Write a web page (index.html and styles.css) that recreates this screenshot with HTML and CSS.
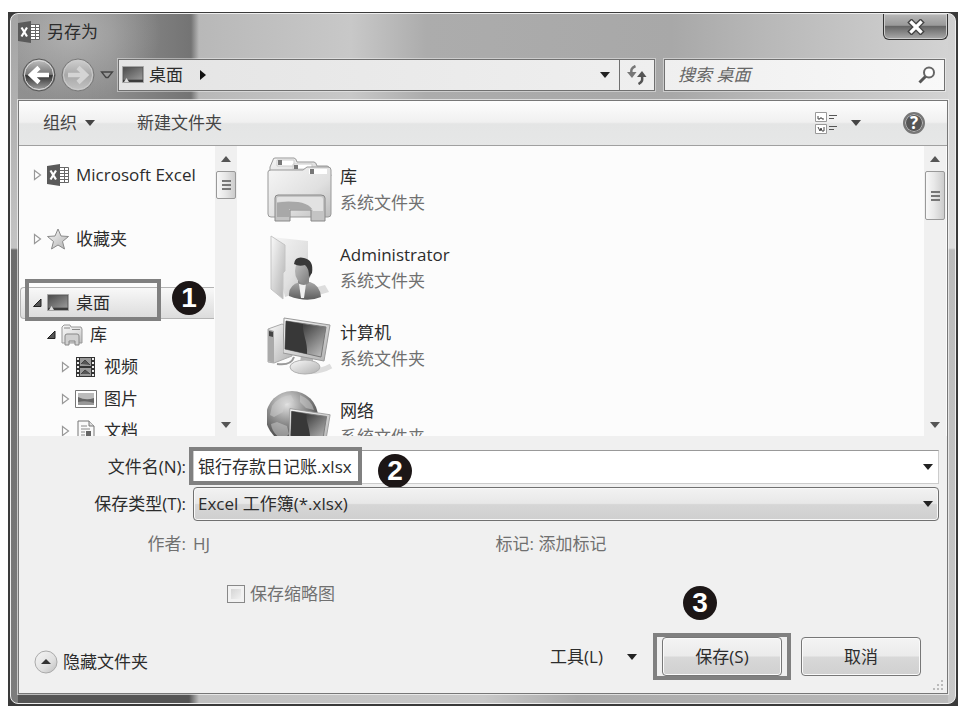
FILE: index.html
```html
<!DOCTYPE html>
<html lang="zh-CN">
<head>
    <meta charset="UTF-8">
    <meta name="viewport" content="width=device-width, initial-scale=1.0">
    <title>另存为</title>
    <link rel="stylesheet" href="styles.css">
</head>
<body>
    <svg class="defs" aria-hidden="true">
        <defs>
            <linearGradient id="metal" x1="0" y1="0" x2="1" y2="1">
                <stop offset="0" stop-color="#fafafa"/>
                <stop offset="1" stop-color="#b0b0b0"/>
            </linearGradient>
            <linearGradient id="folder" x1="0" y1="0" x2="1" y2="1">
                <stop offset="0" stop-color="#f6f6f6"/>
                <stop offset="0.6" stop-color="#e0e0e0"/>
                <stop offset="1" stop-color="#bcbcbc"/>
            </linearGradient>
            <linearGradient id="screen" x1="0" y1="0" x2="1" y2="1">
                <stop offset="0.3" stop-color="#444"/>
                <stop offset="1" stop-color="#c8c8c8"/>
            </linearGradient>
            <linearGradient id="desk" x1="0" y1="0" x2="1" y2="1">
                <stop offset="0" stop-color="#4c4c4c"/>
                <stop offset="1" stop-color="#999"/>
            </linearGradient>
            <linearGradient id="coat" x1="0" y1="0" x2="0" y2="1">
                <stop offset="0" stop-color="#a8a8a8"/>
                <stop offset="1" stop-color="#5c5c5c"/>
            </linearGradient>
            <linearGradient id="face" x1="0" y1="0" x2="1" y2="1">
                <stop offset="0" stop-color="#c8c8c8"/>
                <stop offset="1" stop-color="#777"/>
            </linearGradient>
            <linearGradient id="dark-ball" x1="0" y1="0" x2="0" y2="1">
                <stop offset="0" stop-color="#c4c4c4"/>
                <stop offset="0.48" stop-color="#777"/>
                <stop offset="0.52" stop-color="#333"/>
                <stop offset="1" stop-color="#aaa"/>
            </linearGradient>
            <linearGradient id="light-ball" x1="0" y1="0" x2="0" y2="1">
                <stop offset="0" stop-color="#d0d0d0"/>
                <stop offset="0.5" stop-color="#a8a8a8"/>
                <stop offset="1" stop-color="#c4c4c4"/>
            </linearGradient>
            <radialGradient id="globe" cx="0.4" cy="0.25" r="0.75">
                <stop offset="0" stop-color="#e4e4e4"/>
                <stop offset="0.5" stop-color="#8c8c8c"/>
                <stop offset="1" stop-color="#3c3c3c"/>
            </radialGradient>
        </defs>
        <symbol id="excel" viewBox="0 0 22 22">
            <path d="M12 3.500h9.500v15H12z" fill="#fff" stroke="#666"/>
            <path d="M13 6.500h8M13 9.500h8M13 12.500h8M13 15.500h8M17.500 4v14" stroke="#666"/>
            <path d="M0 2l13-2v22L0 20z" fill="#5a5a5a"/>
            <path d="M3.500 6.500l5.500 9M9 6.500l-5.500 9" stroke="#fff" stroke-width="2.200"/>
        </symbol>
        <symbol id="desktop" viewBox="0 0 22 18">
            <path d="M.5.5h21v16H.5z" fill="#555" stroke="#a4a4a4"/>
            <path d="M1.500 1.500h19v12h-19z" fill="url(#desk)"/>
            <path d="M1 14h20v2H1z" fill="#3c3c3c"/>
            <path d="M2 16l2.500-4L7 16z" fill="#ddd"/>
        </symbol>
        <symbol id="closed" viewBox="0 0 9 12">
            <path d="M1.500 1.500v9L7.500 6z" fill="#fff" stroke="#999" stroke-width="1.200"/>
        </symbol>
        <symbol id="open" viewBox="0 0 9 12">
            <path d="M8 2v7.500H.5z" fill="#555" stroke="#222"/>
        </symbol>
        <symbol id="monitor" viewBox="0 0 48 60">
            <path d="M18 37l12 2v8H17z" fill="#b5b5b5"/>
            <ellipse cx="22" cy="50" rx="15" ry="7" fill="url(#metal)" stroke="#b0b0b0"/>
            <path d="M1 1l46 7-6 36L0 36z" fill="url(#metal)" stroke="#999"/>
            <path d="M3 4l40 6-5 30L2 32z" fill="url(#screen)" stroke="#777"/>
            <path d="M3 4l17 3c-1 9 5 18 4 30L2 32z" fill="#383838"/>
        </symbol>
    </svg>

    <div class="window">
        <div class="frame">
            <header class="titlebar">
                <svg class="app-icon"><use href="#excel"/></svg>
                <h1>另存为</h1>
                <button type="button" class="close" aria-label="关闭">
                    <svg width="18" height="16" viewBox="0 0 18 16">
                        <path d="M4.500 3.500l9 9M13.500 3.500l-9 9" stroke="#444" stroke-width="6" stroke-linecap="square"/>
                        <path d="M4.500 3.500l9 9M13.500 3.500l-9 9" stroke="#fff" stroke-width="3.200" stroke-linecap="square"/>
                    </svg>
                </button>
            </header>

            <div class="navbar">
                <div class="history">
                    <button type="button" aria-label="后退">
                        <svg width="34" height="34" viewBox="0 0 34 34">
                            <circle cx="17" cy="17" r="16" fill="url(#dark-ball)" stroke="#555"/>
                            <circle cx="17" cy="17" r="14.500" fill="none" stroke="#ddd"/>
                            <path d="M27 17H10M17 9.500L9 17l8 7.500" fill="none" stroke="#fff" stroke-width="4.500"/>
                        </svg>
                    </button>
                    <button type="button" aria-label="前进">
                        <svg width="34" height="34" viewBox="0 0 34 34">
                            <circle cx="17" cy="17" r="16" fill="url(#light-ball)" stroke="#777"/>
                            <circle cx="17" cy="17" r="14.500" fill="none" stroke="#ccc"/>
                            <path d="M7 17h17M17 9.500l8 7.500-8 7.500" fill="none" stroke="#d4d4d4" stroke-width="4.500"/>
                        </svg>
                    </button>
                    <button type="button" aria-label="最近的位置">
                        <svg width="14" height="10" viewBox="0 0 14 10">
                            <path d="M1.500 2h11L8 7.500H6z" fill="#999" stroke="#444" stroke-width="1.300"/>
                        </svg>
                    </button>
                </div>
                <div class="address">
                    <svg class="place-icon"><use href="#desktop"/></svg>
                    <span class="crumb">桌面</span>
                    <svg width="6" height="10" viewBox="0 0 6 10"><path d="M0 0l6 5-6 5z" fill="#111"/></svg>
                    <button type="button" class="address-drop" aria-label="以前的位置"><span class="arrow"></span></button>
                    <button type="button" class="refresh" aria-label="刷新">
                        <svg width="20" height="20" viewBox="0 0 20 20">
                            <path d="M8.500 1C4 3 4 5 4.500 9" fill="none" stroke="#777" stroke-width="2.500"/>
                            <path d="M0 7h9.500L5 13z" fill="#777"/>
                            <path d="M11.500 19c4-2 4-4 3.500-8" fill="none" stroke="#555" stroke-width="2.500"/>
                            <path d="M10 12h9.500L15 6z" fill="#555"/>
                        </svg>
                    </button>
                </div>
                <div class="search">
                    <input type="text" placeholder="搜索 桌面" aria-label="搜索 桌面">
                    <svg width="18" height="18" viewBox="0 0 18 18">
                        <path d="M1.500 16.500L8 10" stroke="#555" stroke-width="3"/>
                        <circle cx="11" cy="6.500" r="5" fill="#fff" stroke="#666" stroke-width="2"/>
                    </svg>
                </div>
            </div>

            <main class="client">
                <div class="toolbar">
                    <button type="button">组织 <span class="arrow"></span></button>
                    <button type="button">新建文件夹</button>
                    <button type="button" class="view" aria-label="更改视图">
                        <svg width="24" height="22" viewBox="0 0 24 22">
                            <path d="M.5.5h11v9H.5zM.5 12.500h11v9H.5z" fill="#fff" stroke="#999"/>
                            <path d="M3 4v3h2V6h2v1h2M3 15l2 4 1-3 1 3h2v-4" fill="none" stroke="#444"/>
                            <path d="M14 3.500h8M14 6.500h5M14 14.500h8M14 17.500h5" stroke="#555"/>
                        </svg>
                        <span class="arrow"></span>
                    </button>
                    <button type="button" class="help" aria-label="帮助">?</button>
                </div>

                <div class="browser">
                    <nav class="tree">
                        <ul>
                            <li class="root"><svg class="twisty"><use href="#closed"/></svg><svg class="icon"><use href="#excel"/></svg>Microsoft Excel</li>
                            <li class="root">
                                <svg class="twisty"><use href="#closed"/></svg>
                                <svg class="icon" viewBox="0 0 22 22"><path d="M11 1l3 7 7.500.500-6 5 2 7.500-6.500-4-6.500 4 2-7.500-6-5L8 8z" fill="url(#metal)" stroke="#8a8a8a"/></svg>收藏夹
                            </li>
                            <li class="selected">
                                <svg class="twisty"><use href="#open"/></svg><svg class="icon"><use href="#desktop"/></svg>桌面
                                <span class="outline"></span>
                                <span class="badge">1</span>
                            </li>
                            <li class="level1">
                                <svg class="twisty"><use href="#open"/></svg>
                                <svg class="icon" viewBox="0 0 22 22"><path d="M1 19V3l2-2h6l1 2h10l1 2v14z" fill="url(#folder)" stroke="#999"/><path d="M3 4h6M11 5.500h8" stroke="#888"/><path d="M4 21v-9q0-2 2-2h10q2 0 2 2v9h-4v-4H8v4z" fill="#d0d0d0" stroke="#888"/></svg>库
                            </li>
                            <li class="level2">
                                <svg class="twisty"><use href="#closed"/></svg>
                                <svg class="icon" viewBox="0 0 22 22"><path d="M1 1h19v20H1z" fill="#333"/><path d="M5 2h11v8H5zM5 12h11v8H5z" fill="#999"/><path d="M6 8l4-4 5 5M6 18l4-4 5 4" fill="#555" stroke="#444"/><path d="M3 2v19M18 2v19" stroke="#eee" stroke-width="2" stroke-dasharray="2 2"/></svg>视频
                            </li>
                            <li class="level2">
                                <svg class="twisty"><use href="#closed"/></svg>
                                <svg class="icon" viewBox="0 0 22 22"><path d="M.5 2.500h21v17H.5z" fill="#fff" stroke="#777"/><path d="M3 5h16v12H3z" fill="#bbb"/><path d="M3 9q8 4 16 1v7H3z" fill="#666"/><path d="M3 14q8-2 16 1v2H3z" fill="#999"/></svg>图片
                            </li>
                            <li class="level2">
                                <svg class="twisty"><use href="#closed"/></svg>
                                <svg class="icon" viewBox="0 0 22 22"><path d="M3 1h11l5 5v15H3z" fill="#fafafa" stroke="#777"/><path d="M14 1v5h5" fill="#ddd" stroke="#777"/><path d="M6 6h6M6 9h9M6 12h4M6 15h4M6 18h9" stroke="#888"/><path d="M11 11h5v5h-5z" fill="#666"/></svg>文档
                            </li>
                        </ul>
                    </nav>
                    <div class="scrollbar">
                        <span class="arrow up"></span>
                        <span class="thumb"></span>
                        <span class="arrow down"></span>
                    </div>

                    <ul class="files">
                        <li>
                            <svg width="66" height="66" viewBox="0 0 66 66">
                                <path d="M3 16V10L6 3q0-2 2-2h19q2 0 3 4h17q2 0 3 4h10q2 0 2 2l2 8z" fill="url(#folder)" stroke="#999"/>
                                <path d="M10 3h17v6H10zM26 7h19v5H26zM42 11h18v5H42z" fill="#fff" stroke="#ccc"/>
                                <path d="M11 3h4v5h-4zM27 8h4v4h-4z" fill="#777"/>
                                <path d="M1 15q0-2 3-2h32l4-3h21q3 0 3 3v44q0 3-3 3H4q-3 0-3-3z" fill="url(#folder)" stroke="#999"/>
                                <path d="M42 12h18v5H42z" fill="#fff"/>
                                <path d="M43 12h4v5h-4z" fill="#777"/>
                                <path d="M8 64V41q0-3 3-3h43q4 0 4 3v23H44V53H23v11z" fill="#c4c4c4" stroke="#888"/>
                                <path d="M10 46q30-7 36 6H22v8H10z" fill="#a8a8a8"/>
                                <path d="M10 45v-4q0-1 2-1h42q2 0 2 2v12H46Q42 42 10 45z" fill="#e2e2e2"/>
                            </svg>
                            <div class="file-text"><span>库</span><small>系统文件夹</small></div>
                        </li>
                        <li>
                            <svg width="66" height="66" viewBox="0 0 66 66">
                                <path d="M4 2l37 4v48L18 62z" fill="url(#folder)"/>
                                <path d="M20 60l38-10 4 7-24 7z" fill="#ddd"/>
                                <path d="M4 1l14 9v26l-2 2v26L4 54z" fill="url(#metal)" stroke="#c4c4c4"/>
                                <path d="M22 61q-1-11 11-14h10q10 3 11 15-14 6-32-1z" fill="url(#coat)"/>
                                <path d="M32 49l2 14h3l2-14z" fill="#f0f0f0"/>
                                <path d="M31 42h11v6q-5 4-11 0z" fill="#888"/>
                                <ellipse cx="36" cy="36" rx="8" ry="12" fill="url(#face)"/>
                                <path d="M27 29q1-8 10-6 10 2 8 15l-3 4q0-9-4-12-6 2-11-1z" fill="#383838"/>
                            </svg>
                            <div class="file-text"><span>Administrator</span><small>系统文件夹</small></div>
                        </li>
                        <li>
                            <svg width="66" height="66" viewBox="0 0 66 66">
                                <path d="M1 16l14-5 10 4v28L7 50l-6-1z" fill="url(#metal)" stroke="#aaa"/>
                                <path d="M1 16l6 2v32l-6-2z" fill="#aaa"/>
                                <path d="M2 18l4 1v5l-4-1z" fill="#444"/>
                                <path d="M10 51q14 2 17-7" fill="none" stroke="#999" stroke-width="2"/>
                                <path d="M36 58q16 2 28-5" fill="none" stroke="#ddd" stroke-width="5"/>
                                <use href="#monitor" x="16" y="4" width="48" height="60"/>
                            </svg>
                            <div class="file-text"><span>计算机</span><small>系统文件夹</small></div>
                        </li>
                        <li>
                            <svg width="66" height="66" viewBox="0 0 66 66">
                                <circle cx="25" cy="26" r="26" fill="url(#globe)"/>
                                <path d="M5 15Q12 5 24 4l3 6-9 3-2 8-9 5-4-2zM33 4q12 5 14 15l-8-2-6-6zM10 31l10 4 2 8-6 6Q5 43 4 33z" fill="#d0d0d0" opacity=".5"/>
                                <use href="#monitor" x="22" y="16" width="42" height="54"/>
                            </svg>
                            <div class="file-text"><span>网络</span><small>系统文件夹</small></div>
                        </li>
                    </ul>
                    <div class="scrollbar">
                        <span class="arrow up"></span>
                        <span class="thumb long"></span>
                        <span class="arrow down"></span>
                    </div>
                </div>

                <form class="details">
                    <div class="field">
                        <label for="filename">文件名(N):</label>
                        <div class="combo">
                            <input type="text" id="filename" value="银行存款日记账.xlsx">
                            <span class="arrow"></span>
                            <span class="outline"></span>
                            <span class="badge">2</span>
                        </div>
                    </div>
                    <div class="field">
                        <label for="filetype">保存类型(T):</label>
                        <div class="combo">
                            <select id="filetype">
                                <option>Excel 工作簿(*.xlsx)</option>
                            </select>
                            <span class="arrow"></span>
                        </div>
                    </div>
                    <div class="meta">
                        <span class="meta-label">作者:</span>
                        <span>HJ</span>
                        <span>标记: 添加标记</span>
                    </div>
                    <div class="thumbnail">
                        <input type="checkbox" id="thumbnail">
                        <label for="thumbnail">保存缩略图</label>
                    </div>
                    <div class="actions">
                        <button type="button" class="hide">
                            <svg width="24" height="24" viewBox="0 0 24 24">
                                <circle cx="12" cy="12" r="11" fill="url(#folder)" stroke="#aaa"/>
                                <path d="M7 14h10l-5-5z" fill="#333"/>
                            </svg>
                            隐藏文件夹
                        </button>
                        <button type="button" class="tools">工具(L) <span class="arrow"></span></button>
                        <div class="save">
                            <button type="submit" class="push">保存(S)</button>
                            <span class="badge">3</span>
                        </div>
                        <button type="button" class="push">取消</button>
                    </div>
                    <svg class="grip" width="12" height="12" viewBox="0 0 12 12"><path d="M9 1h2v2H9zM5 5h2v2H5zM9 5h2v2H9zM1 9h2v2H1zM5 9h2v2H5zM9 9h2v2H9z" fill="#bbb"/></svg>
                </form>
            </main>
        </div>
    </div>
</body>
</html>
```
FILE: styles.css
```css
* {
    box-sizing: border-box;
}

body {
    display: flex;
    height: 100vh;
    margin: 0;
    padding: 12px 4px 5px 8px;
    background: #fff;
    color: #2c2c2c;
    font: 17px/24px "Open Sans", "Noto Sans CJK SC", sans-serif;
}

button, input, select {
    font: inherit;
    color: inherit;
}

button {
    display: flex;
    align-items: center;
    padding: 0;
    border: 0;
    background: none;
}

ul {
    margin: 0;
    padding: 0;
    list-style: none;
}

svg {
    display: block;
    flex: none;
}

.defs {
    position: absolute;
    width: 0;
    height: 0;
}

.arrow {
    flex: none;
    border: 5px solid transparent;
    border-top: 6px solid #222;
    border-bottom: 0;
}

/* window frame */
.window {
    display: flex;
    flex: 1;
    min-width: 0;
    padding: 1px 2px 2px;
    background: #3a3a3a;
}

.frame {
    display: flex;
    flex-direction: column;
    flex: 1;
    min-width: 0;
    padding: 0 7px 9px;
    border: 1px solid #eee;
    border-radius: 8px;
    background:
        linear-gradient(#a4a4a4, #c4c4c4 234px, #6c6c6c 236px, #7c7c7c) left / 7px 100% no-repeat,
        linear-gradient(#d0d0d0, #ddd 234px, #bbb 236px, #c8c8c8) right / 7px 100% no-repeat,
        linear-gradient(90deg, #555 178px, #c0c0c0 188px, #c8c8c8 50%, #aaa 60%, #bbb) bottom / 100% 9px no-repeat,
        radial-gradient(ellipse at 60px 20px, rgba(190, 190, 190, 0.7), rgba(150, 150, 150, 0) 90px),
        linear-gradient(90deg, #909090, #8c8c8c 100px, #747474 180px, #b8b8b8 188px, #c8c8c8 36%, #acacac 44%, #a8a8a8 70%, #b8b8b8 80%, #d4d4d4);
}

.titlebar {
    display: flex;
    align-items: flex-start;
    height: 45px;
}

.titlebar h1 {
    flex: 1;
    margin: 6px 0 0 7px;
    font-size: 17px;
    font-weight: normal;
}

.app-icon {
    width: 22px;
    height: 22px;
    margin-top: 7px;
}

.close {
    justify-content: center;
    width: 65px;
    height: 26px;
    border: 1px solid #333;
    border-top: 0;
    border-radius: 0 0 6px 6px;
    background: linear-gradient(#b8b8b8, #999 45%, #666 50%, #aaa);
    box-shadow: inset 0 0 0 1px #ccc;
}

.navbar {
    display: flex;
    height: 32px;
    margin: 0 3px 9px 4px;
}

.history {
    display: flex;
    align-items: center;
    width: 96px;
    gap: 5px;
}

.address, .search {
    display: flex;
    align-items: center;
    border: 1px solid #707070;
    background: linear-gradient(90deg, #e4e4e4, #efefef);
    box-shadow: 0 0 0 1px rgba(255, 255, 255, 0.4);
}

.address {
    flex: 1;
    padding-left: 3px;
}

.place-icon {
    width: 22px;
    height: 18px;
}

.crumb {
    margin: 0 17px 0 5px;
}

.address-drop {
    height: 100%;
    margin-left: auto;
    padding: 0 9px;
}

.refresh {
    justify-content: center;
    width: 35px;
    height: 100%;
    border-left: 1px solid #707070;
}

.search {
    width: 281px;
    margin-left: 9px;
    padding: 0 8px 0 13px;
    background: linear-gradient(90deg, #efefef, #f8f8f8);
}

.search input {
    flex: 1;
    min-width: 0;
    padding: 0;
    border: 0;
    background: none;
    font-style: italic;
}

.search input::placeholder {
    color: #666;
}

.client {
    display: flex;
    flex-direction: column;
    flex: 1;
    min-height: 0;
    border: 1px solid #777;
    background: #f0f0f0;
    box-shadow: 0 0 0 1px rgba(255, 255, 255, 0.6);
}

/* toolbar */
.toolbar {
    display: flex;
    align-items: center;
    flex: none;
    height: 45px;
    gap: 42px;
    padding: 0 22px 0 24px;
    border-bottom: 1px solid #a0a0a0;
    background: linear-gradient(#fdfdfd, #f0f0f0 48%, #e4e5e5 52%, #e6e7e7);
    color: #444;
}

.toolbar button {
    gap: 8px;
}

.toolbar .arrow {
    border-top-color: #444;
}

.toolbar .view {
    gap: 12px;
    margin-left: auto;
}

.toolbar .help {
    justify-content: center;
    width: 22px;
    height: 22px;
    border: 2px solid #777;
    border-radius: 50%;
    background: #555;
    box-shadow: inset 0 0 0 1px #bbb;
    color: #fff;
    font-weight: bold;
}

/* folder tree and file list */
.browser {
    display: flex;
    flex: 1;
    min-height: 0;
    overflow: hidden;
    background: #fcfcfc;
}

.tree {
    width: 196px;
    padding: 13px 1px 0;
}

.tree li {
    display: flex;
    align-items: center;
    height: 32px;
    padding-left: 13px;
    white-space: nowrap;
}

.tree .root {
    margin-bottom: 32px;
}

.tree .selected {
    position: relative;
    padding-left: 12px;
    border: 1px solid #b4b4b4;
    border-right: 0;
    border-radius: 4px 0 0 4px;
    background: linear-gradient(#f8f8f8, #dcdcdc);
}

.tree .level1 {
    padding-left: 27px;
}

.tree .level2 {
    padding-left: 41px;
}

.twisty {
    width: 9px;
    height: 12px;
    margin-right: 5px;
}

.icon {
    width: 22px;
    height: 22px;
    margin-right: 7px;
}

.scrollbar {
    display: flex;
    flex-direction: column;
    align-items: center;
    flex: none;
    width: 22px;
    padding: 10px 0 8px;
    background: #f0f0f0;
}

.scrollbar .arrow {
    border-top-color: #555;
}

.scrollbar .up {
    border-top: 0;
    border-bottom: 6px solid #555;
}

.scrollbar .down {
    margin-top: auto;
}

.thumb {
    width: 20px;
    height: 28px;
    margin-top: 9px;
    border: 1px solid #999;
    border-radius: 2px;
    background:
        repeating-linear-gradient(#777 0 2px, transparent 2px 4px) center / 9px 10px no-repeat,
        linear-gradient(90deg, #f8f8f8, #e8e8e8 45%, #ccc);
}

.long {
    height: 49px;
}

.files {
    flex: 1;
    padding: 5px 0 0 30px;
}

.files li {
    display: flex;
    align-items: center;
    height: 78px;
    gap: 7px;
}

.file-text {
    display: flex;
    flex-direction: column;
    line-height: 26px;
}

.file-text small {
    color: #707070;
    font-size: 17px;
}

.browser > .scrollbar:last-child {
    margin-right: 1px;
}

/* file name, type and buttons */
.details {
    position: relative;
    flex: none;
    padding: 14px 8px 13px 0;
}

.field {
    display: flex;
    align-items: center;
    height: 34px;
    margin-bottom: 3px;
    gap: 7px;
}

.field label {
    width: 167px;
    text-align: right;
}

.combo {
    position: relative;
    display: flex;
    flex: 1;
    height: 34px;
}

.combo input, .combo select {
    width: 100%;
    padding: 0 24px 0 4px;
    border: 1px solid #ccc;
    border-top-color: #999;
    background: #fff;
}

.combo select {
    appearance: none;
    border: 1px solid #707070;
    border-radius: 4px;
    background: linear-gradient(#f2f2f2, #e8e8e8 48%, #d6d6d6 52%, #cfcfcf);
    box-shadow: inset 0 0 0 1px #f8f8f8;
}

.combo .arrow {
    position: absolute;
    top: 14px;
    right: 6px;
    pointer-events: none;
}

.meta {
    display: grid;
    grid-template-columns: 167px 2fr 3fr;
    gap: 7px;
    margin-top: 11px;
    color: #707070;
}

.meta-label {
    text-align: right;
}

.thumbnail {
    display: flex;
    align-items: center;
    gap: 5px;
    margin: 26px 0 27px 208px;
    color: #707070;
}

.thumbnail input {
    appearance: none;
    width: 18px;
    height: 18px;
    margin: 0;
    border: 1px solid #888;
    background: linear-gradient(135deg, #ccc, #fafafa);
    box-shadow: inset 0 0 0 3px #f2f2f2;
}

.actions {
    display: flex;
    align-items: center;
    height: 47px;
    padding: 0 18px 0 15px;
}

.hide {
    align-self: flex-end;
    height: 36px;
    gap: 5px;
}

.tools {
    gap: 24px;
    margin: 0 16px 0 auto;
}

.push {
    justify-content: center;
    width: 120px;
    height: 39px;
    border: 1px solid #777;
    border-radius: 4px;
    background: linear-gradient(#f4f4f4, #ebebeb 48%, #d8d8d8 52%, #d0d0d0);
    box-shadow: inset 0 0 0 1px #fafafa;
}

.save {
    position: relative;
    display: flex;
    padding: 0 5px;
    margin-right: 10px;
    border: 4px solid #808080;
}

/* numbered steps */
.outline {
    position: absolute;
    border: 4px solid #808080;
}

.badge {
    position: absolute;
    width: 34px;
    height: 34px;
    border-radius: 50%;
    background: #1c1616;
    color: #fff;
    font: bold 28px/34px "Liberation Sans", sans-serif;
    text-align: center;
}

.selected .outline {
    top: -9px;
    left: 4px;
    width: 136px;
    height: 42px;
}

.selected .badge {
    top: -7px;
    left: 151px;
}

.combo .outline {
    top: -3px;
    left: -4px;
    width: 173px;
    height: 38px;
}

.combo .badge {
    top: 4px;
    left: 185px;
}

.save .badge {
    top: -51px;
    left: 26px;
}

.grip {
    position: absolute;
    right: 3px;
    bottom: 2px;
}
```
